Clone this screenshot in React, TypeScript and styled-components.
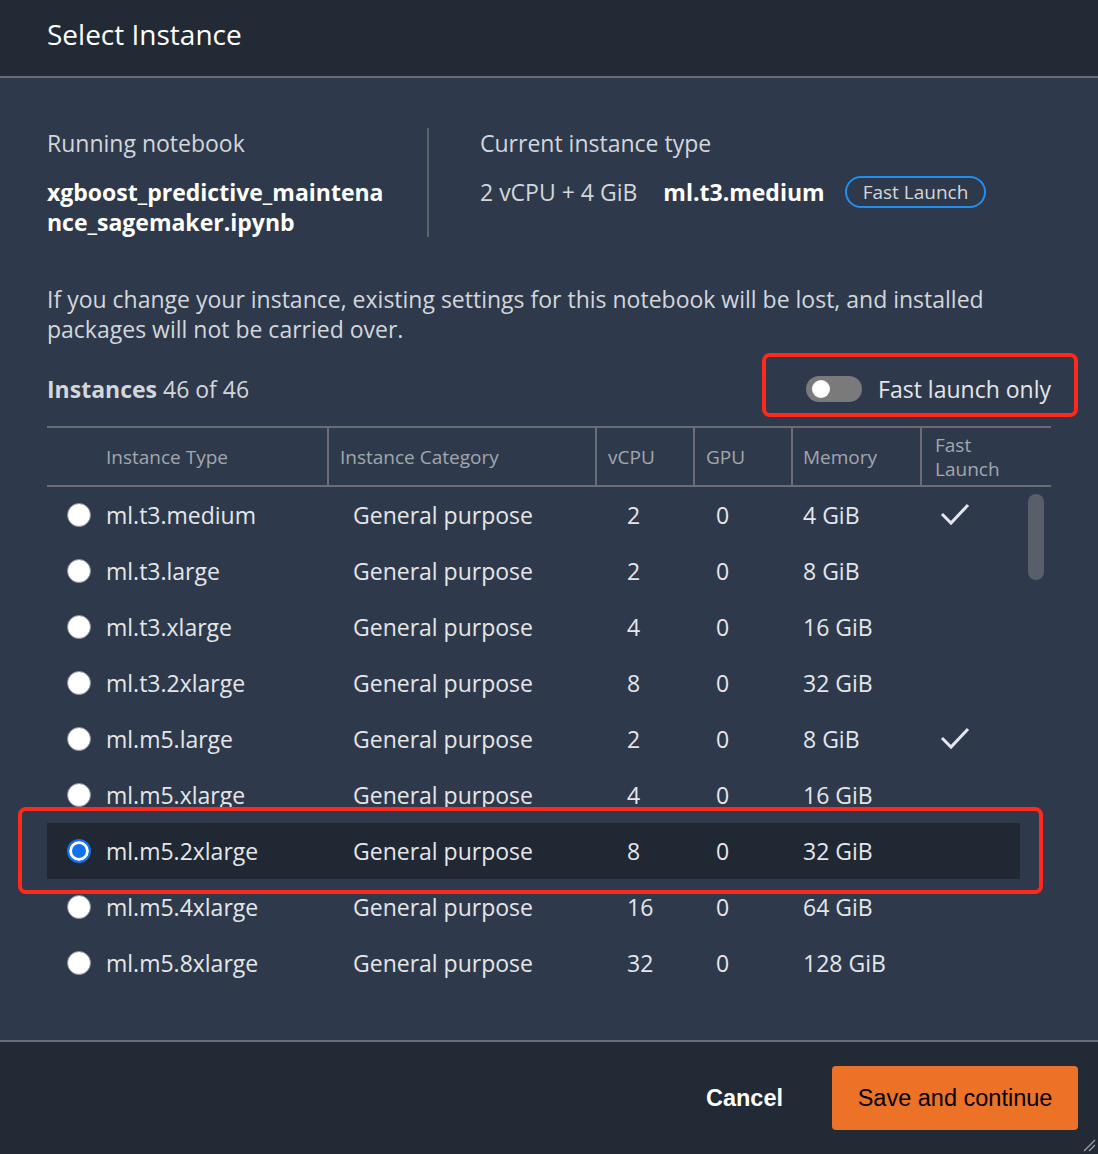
import React, { useState } from "react";
import styled, { createGlobalStyle } from "styled-components";

const headerBg = "#212a35";
const bodyBg = "#2e3a4b";
const lineGrey = "#6a6e74";
const textLight = "#e4e6ea";
const textMuted = "#d3d6db";
const headGrey = "#a2a7ae";
const red = "#ff2a1c";
const uiFont = `"Open Sans", "Noto Sans", sans-serif`;

const GlobalStyle = createGlobalStyle`
  body {
    margin: 0;
    background: ${bodyBg};
    font-family: ${uiFont};
    color: ${textLight};
  }
`;

const Modal = styled.div`
  width: 1098px;
  height: 1154px;
  display: flex;
  flex-direction: column;
  background: ${bodyBg};
  position: relative;
  overflow: hidden;
`;

const Header = styled.header`
  height: 78px;
  flex: none;
  box-sizing: border-box;
  display: flex;
  align-items: center;
  padding: 0 47px 9px;
  background: ${headerBg};
  border-bottom: 2px solid ${lineGrey};
`;

const Title = styled.h1`
  margin: 0;
  font-size: 28px;
  font-weight: 400;
  color: #ffffff;
`;

const Body = styled.main`
  flex: 1;
  padding: 50px 47px 0;
`;

const InfoRow = styled.section`
  display: flex;
`;

const InfoCol = styled.div<{ $divided?: boolean; $width?: number }>`
  width: ${(p) => (p.$width ? `${p.$width}px` : "auto")};
  flex: ${(p) => (p.$width ? "none" : "1")};
  padding-left: ${(p) => (p.$divided ? "0" : "51px")};
  border-right: ${(p) => (p.$divided ? `2px solid #5d636b` : "none")};
  box-sizing: border-box;
`;

const Label = styled.div`
  font-size: 23px;
  line-height: 30px;
  color: ${textMuted};
  margin-bottom: 19px;
`;

const FileName = styled.div`
  font-size: 23px;
  line-height: 30px;
  font-weight: 700;
  color: #ffffff;
  width: 340px;
  word-break: break-all;
`;

const CurrentRow = styled.div`
  display: flex;
  align-items: center;
  height: 30px;
  font-size: 23px;
  color: ${textMuted};
`;

const Strong = styled.b`
  font-weight: 700;
  color: #ffffff;
  margin-left: 26px;
  margin-right: 20px;
`;

const Badge = styled.span`
  display: inline-flex;
  align-items: center;
  height: 32px;
  box-sizing: border-box;
  padding: 0 16px;
  border: 2px solid #1f8ff0;
  border-radius: 16px;
  font-size: 19px;
  color: ${textMuted};
`;

const Notice = styled.p`
  margin: 47px 0 0;
  font-size: 23px;
  line-height: 30px;
  color: ${textMuted};
`;

const CountBar = styled.div`
  margin-top: 30px;
  height: 30px;
  display: flex;
  align-items: center;
  justify-content: space-between;
  font-size: 23px;
  color: ${textMuted};
`;

const Annotated = styled.div<{ $inset: string }>`
  position: relative;
  &::after {
    content: "";
    position: absolute;
    inset: ${(p) => p.$inset};
    border: 4px solid ${red};
    border-radius: 8px;
    pointer-events: none;
    z-index: 2;
  }
`;

const ToggleGroup = styled(Annotated)`
  display: flex;
  align-items: center;
  gap: 16px;
  height: 30px;
  color: ${textLight};
`;

const Track = styled.button<{ $on: boolean }>`
  width: 56px;
  height: 26px;
  border: none;
  padding: 0;
  border-radius: 13px;
  background: ${(p) => (p.$on ? "#1f8ff0" : "#7a7a7a")};
  position: relative;
  cursor: pointer;
  &::before {
    content: "";
    position: absolute;
    top: 4px;
    left: ${(p) => (p.$on ? "34px" : "6px")};
    width: 18px;
    height: 18px;
    border-radius: 50%;
    background: #ffffff;
  }
`;

const cols = "282px 268px 98px 98px 129px 1fr";

const Table = styled.div`
  margin-top: 22px;
`;

const HeadRow = styled.div`
  display: grid;
  grid-template-columns: ${cols};
  height: 61px;
  box-sizing: border-box;
  border-top: 2px solid ${lineGrey};
  border-bottom: 2px solid ${lineGrey};
`;

const HeadCell = styled.div<{ $pad: number; $last?: boolean }>`
  display: flex;
  align-items: center;
  padding-left: ${(p) => p.$pad}px;
  border-right: ${(p) => (p.$last ? "none" : `2px solid ${lineGrey}`)};
  font-size: 19px;
  line-height: 24px;
  color: ${headGrey};
`;

const ListArea = styled.div`
  display: flex;
`;

const Rows = styled.div`
  width: 973px;
`;

const RowBox = styled.div<{ $selected: boolean }>`
  display: grid;
  grid-template-columns: ${cols};
  height: 56px;
  align-items: center;
  font-size: 23px;
  color: ${textLight};
  background: ${(p) => (p.$selected ? "#1f2833" : "transparent")};
  cursor: pointer;
`;

const Cell = styled.div<{ $pad: number }>`
  display: flex;
  align-items: center;
  padding-left: ${(p) => p.$pad}px;
  white-space: nowrap;
`;

const Radio = styled.span<{ $checked: boolean }>`
  width: 24px;
  height: 24px;
  box-sizing: border-box;
  border-radius: 50%;
  margin-right: 15px;
  flex: none;
  background: ${(p) => (p.$checked ? "#1570ef" : "#ffffff")};
  border: ${(p) => (p.$checked ? "2px solid #1570ef" : "1.5px solid #8a8f96")};
  box-shadow: ${(p) => (p.$checked ? "inset 0 0 0 3px #ffffff" : "none")};
`;

const ScrollTrack = styled.div`
  width: 30px;
  padding: 7px 0 0 8px;
  box-sizing: border-box;
`;

const Thumb = styled.div`
  width: 16px;
  height: 86px;
  border-radius: 8px;
  background: #585f69;
`;

const Footer = styled.footer`
  height: 112px;
  flex: none;
  display: flex;
  align-items: center;
  justify-content: flex-end;
  gap: 29px;
  padding: 0 20px;
  background: ${headerBg};
  border-top: 2px solid ${lineGrey};
  position: relative;
`;

const TextButton = styled.button`
  background: none;
  border: none;
  padding: 0 20px;
  font-family: "Liberation Sans", Arial, sans-serif;
  font-weight: 700;
  font-size: 23.5px;
  color: #ffffff;
  cursor: pointer;
`;

const PrimaryButton = styled.button`
  width: 246px;
  height: 64px;
  border: none;
  border-radius: 4px;
  background: #ec7228;
  font-family: "Liberation Sans", Arial, sans-serif;
  font-size: 23.5px;
  color: #000000;
  cursor: pointer;
`;

const Grip = styled.svg`
  position: absolute;
  right: 2px;
  bottom: 2px;
`;

type Instance = {
  name: string;
  vcpu: number;
  memory: number;
  fast?: boolean;
};

const instances: Instance[] = [
  { name: "ml.t3.medium", vcpu: 2, memory: 4, fast: true },
  { name: "ml.t3.large", vcpu: 2, memory: 8 },
  { name: "ml.t3.xlarge", vcpu: 4, memory: 16 },
  { name: "ml.t3.2xlarge", vcpu: 8, memory: 32 },
  { name: "ml.m5.large", vcpu: 2, memory: 8, fast: true },
  { name: "ml.m5.xlarge", vcpu: 4, memory: 16 },
  { name: "ml.m5.2xlarge", vcpu: 8, memory: 32 },
  { name: "ml.m5.4xlarge", vcpu: 16, memory: 64 },
  { name: "ml.m5.8xlarge", vcpu: 32, memory: 128 },
];

const Check = () => (
  <svg width="30" height="24" viewBox="0 0 30 24">
    <polyline
      points="2,11 11,20 28,2"
      fill="none"
      stroke="#e4e6ea"
      strokeWidth="3"
    />
  </svg>
);

const InstanceRow = ({
  item,
  selected,
  onSelect,
}: {
  item: Instance;
  selected: boolean;
  onSelect: () => void;
}) => {
  const row = (
    <RowBox $selected={selected} onClick={onSelect}>
      <Cell $pad={20}>
        <Radio $checked={selected} />
        {item.name}
      </Cell>
      <Cell $pad={24}>General purpose</Cell>
      <Cell $pad={30}>{item.vcpu}</Cell>
      <Cell $pad={21}>0</Cell>
      <Cell $pad={10}>{item.memory} GiB</Cell>
      <Cell $pad={18}>{item.fast && <Check />}</Cell>
    </RowBox>
  );
  if (selected) {
    return <Annotated $inset="-16px -23px -15px -29px">{row}</Annotated>;
  }
  return row;
};

const App = () => {
  const [selected, setSelected] = useState("ml.m5.2xlarge");
  const [fastOnly, setFastOnly] = useState(false);
  return (
    <>
      <GlobalStyle />
      <Modal>
        <Header>
          <Title>Select Instance</Title>
        </Header>
        <Body>
          <InfoRow>
            <InfoCol $divided $width={382}>
              <Label>Running notebook</Label>
              <FileName>xgboost_predictive_maintenance_sagemaker.ipynb</FileName>
            </InfoCol>
            <InfoCol>
              <Label>Current instance type</Label>
              <CurrentRow>
                2 vCPU + 4 GiB
                <Strong>ml.t3.medium</Strong>
                <Badge>Fast Launch</Badge>
              </CurrentRow>
            </InfoCol>
          </InfoRow>
          <Notice>
            If you change your instance, existing settings for this notebook
            will be lost, and installed packages will not be carried over.
          </Notice>
          <CountBar>
            <span>
              <b>Instances</b> 46 of 46
            </span>
            <ToggleGroup $inset="-21px -27px -13px -44px">
              <Track $on={fastOnly} onClick={() => setFastOnly(!fastOnly)} />
              Fast launch only
            </ToggleGroup>
          </CountBar>
          <Table>
            <HeadRow>
              <HeadCell $pad={59}>Instance Type</HeadCell>
              <HeadCell $pad={11}>Instance Category</HeadCell>
              <HeadCell $pad={11}>vCPU</HeadCell>
              <HeadCell $pad={11}>GPU</HeadCell>
              <HeadCell $pad={10}>Memory</HeadCell>
              <HeadCell $pad={13} $last>
                Fast
                <br />
                Launch
              </HeadCell>
            </HeadRow>
            <ListArea>
              <Rows>
                {instances.map((item) => (
                  <InstanceRow
                    key={item.name}
                    item={item}
                    selected={item.name === selected}
                    onSelect={() => setSelected(item.name)}
                  />
                ))}
              </Rows>
              <ScrollTrack>
                <Thumb />
              </ScrollTrack>
            </ListArea>
          </Table>
        </Body>
        <Footer>
          <TextButton>Cancel</TextButton>
          <PrimaryButton>Save and continue</PrimaryButton>
          <Grip width="14" height="14" viewBox="0 0 14 14">
            <line x1="2" y1="13" x2="13" y2="2" stroke="#9aa0a8" strokeWidth="1.2" />
            <line x1="7" y1="13" x2="13" y2="7" stroke="#9aa0a8" strokeWidth="1.2" />
          </Grip>
        </Footer>
      </Modal>
    </>
  );
};

export default App;
